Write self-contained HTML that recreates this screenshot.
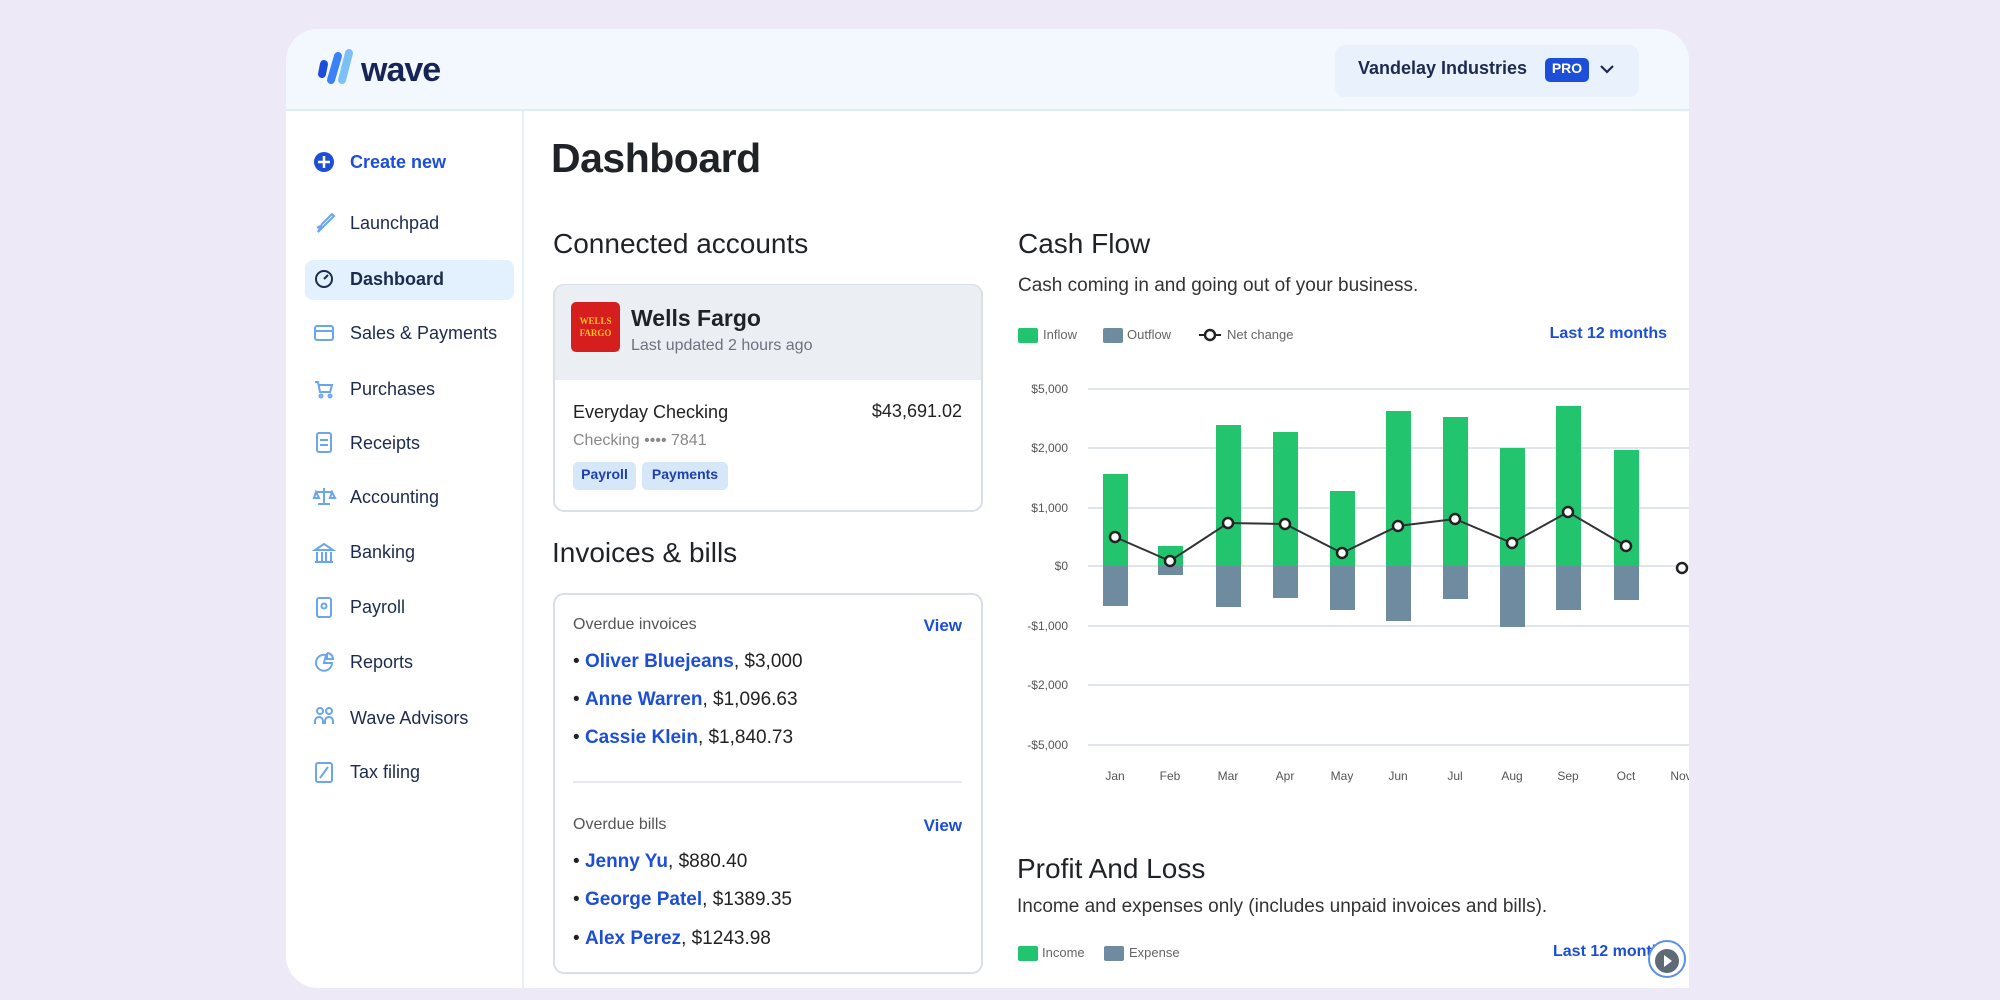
<!DOCTYPE html>
<html><head><meta charset="utf-8"><style>
*{margin:0;padding:0;box-sizing:border-box}
body{width:2000px;height:1000px;background:#ede9f6;font-family:"Liberation Sans",sans-serif;position:relative;overflow:hidden}
#card{position:absolute;left:286px;top:29px;width:1403px;height:959px;background:#fff;border-radius:32px 32px 0 32px;overflow:hidden}
.a{position:absolute;white-space:nowrap}
.nav{position:absolute;left:64px;font-size:18px;color:#1d2b4f;line-height:22px}
.blue{color:#1d4ed8}
.it{font-size:19px;color:#222;line-height:24px}
.it b{color:#1d4ed8}
</style></head><body>
<div id="card">
<svg class="a" style="left:-286px;top:-29px" width="2000" height="1000" viewBox="0 0 2000 1000">
<rect x="286" y="29" width="1403" height="81" fill="#f3f8fe"/>
<line x1="286" y1="110" x2="1689" y2="110" stroke="#e0ecf8" stroke-width="2"/>
<line x1="523" y1="110" x2="523" y2="988" stroke="#e8f0f8" stroke-width="2"/>
<rect x="1335" y="45" width="304" height="52" rx="10" fill="#e8f1fc"/>
<g stroke-linecap="round" fill="none">
<line x1="322" y1="74" x2="324" y2="64" stroke="#1d4ed8" stroke-width="8"/>
<line x1="331" y1="80" x2="338" y2="56" stroke="#3b82f6" stroke-width="8"/>
<line x1="342" y1="80" x2="349" y2="53" stroke="#7cc0f5" stroke-width="8"/>
</g>
<rect x="305" y="260" width="209" height="40" rx="8" fill="#e3f0fd"/>
<rect x="554" y="285" width="428" height="226" rx="10" fill="#fff" stroke="#d9dfe6" stroke-width="2"/>
<path d="M555 380 V295 a10 10 0 0 1 10 -10 H971 a10 10 0 0 1 10 10 V380Z" fill="#ebeef2"/>
<rect x="571" y="302" width="49" height="50" rx="5" fill="#d71e1e"/>
<text x="595.5" y="324" font-size="9" fill="#f5c518" text-anchor="middle" font-family="Liberation Serif" font-weight="bold">WELLS</text>
<text x="595.5" y="336" font-size="9" fill="#f5c518" text-anchor="middle" font-family="Liberation Serif" font-weight="bold">FARGO</text>
<rect x="573" y="462" width="63" height="28" rx="5" fill="#d5e7f8"/>
<rect x="642" y="462" width="86" height="28" rx="5" fill="#d5e7f8"/>
<rect x="554" y="594" width="428" height="379" rx="10" fill="#fff" stroke="#d9dfe6" stroke-width="2"/>
<line x1="573" y1="782" x2="962" y2="782" stroke="#e6e9ee" stroke-width="2"/>
<g stroke="#dfe5ea" stroke-width="2">
<line x1="1088" y1="389" x2="1689" y2="389"/><line x1="1088" y1="448" x2="1689" y2="448"/>
<line x1="1088" y1="508" x2="1689" y2="508"/><line x1="1088" y1="566" x2="1689" y2="566"/>
<line x1="1088" y1="626" x2="1689" y2="626"/><line x1="1088" y1="685" x2="1689" y2="685"/>
<line x1="1088" y1="745" x2="1689" y2="745"/></g>
<g font-size="12" fill="#555" text-anchor="end">
<text x="1068" y="393">$5,000</text><text x="1068" y="452">$2,000</text><text x="1068" y="512">$1,000</text>
<text x="1068" y="570">$0</text><text x="1068" y="630">-$1,000</text><text x="1068" y="689">-$2,000</text><text x="1068" y="749">-$5,000</text></g>
<g font-size="12" fill="#555" text-anchor="middle">
<text x="1115" y="780">Jan</text><text x="1170" y="780">Feb</text><text x="1228" y="780">Mar</text><text x="1285" y="780">Apr</text><text x="1342" y="780">May</text><text x="1398" y="780">Jun</text><text x="1455" y="780">Jul</text><text x="1512" y="780">Aug</text><text x="1568" y="780">Sep</text><text x="1626" y="780">Oct</text><text x="1681" y="780">Nov</text></g>
<g fill="#22c46e">
<rect x="1103" y="474" width="25" height="92"/><rect x="1158" y="546" width="25" height="20"/>
<rect x="1216" y="425" width="25" height="141"/><rect x="1273" y="432" width="25" height="134"/>
<rect x="1330" y="491" width="25" height="75"/><rect x="1386" y="411" width="25" height="155"/>
<rect x="1443" y="417" width="25" height="149"/><rect x="1500" y="448" width="25" height="118"/>
<rect x="1556" y="406" width="25" height="160"/><rect x="1614" y="450" width="25" height="116"/></g>
<g fill="#6f8ba0">
<rect x="1103" y="566" width="25" height="40"/><rect x="1158" y="566" width="25" height="9"/>
<rect x="1216" y="566" width="25" height="41"/><rect x="1273" y="566" width="25" height="32"/>
<rect x="1330" y="566" width="25" height="44"/><rect x="1386" y="566" width="25" height="55"/>
<rect x="1443" y="566" width="25" height="33"/><rect x="1500" y="566" width="25" height="61"/>
<rect x="1556" y="566" width="25" height="44"/><rect x="1614" y="566" width="25" height="34"/></g>
<polyline points="1115,537 1170,561 1228,523 1285,524 1342,553 1398,526 1455,519 1512,543 1568,512 1626,546" fill="none" stroke="#333" stroke-width="2"/>
<g fill="#fff" stroke="#222" stroke-width="2.5">
<circle cx="1115" cy="537" r="5"/><circle cx="1170" cy="561" r="5"/><circle cx="1228" cy="523" r="5"/><circle cx="1285" cy="524" r="5"/><circle cx="1342" cy="553" r="5"/><circle cx="1398" cy="526" r="5"/><circle cx="1455" cy="519" r="5"/><circle cx="1512" cy="543" r="5"/><circle cx="1568" cy="512" r="5"/><circle cx="1626" cy="546" r="5"/><circle cx="1682" cy="568" r="5"/></g>
<rect x="1018" y="328" width="20" height="15" rx="2" fill="#22c46e"/>
<rect x="1103" y="328" width="20" height="15" rx="2" fill="#6f8ba0"/>
<line x1="1199" y1="335" x2="1221" y2="335" stroke="#222" stroke-width="2"/><circle cx="1210" cy="335" r="5" fill="#fff" stroke="#222" stroke-width="2.5"/>
<rect x="1018" y="946" width="20" height="15" rx="2" fill="#22c46e"/>
<rect x="1104" y="946" width="20" height="15" rx="2" fill="#6f8ba0"/>
<circle cx="324" cy="162" r="10" fill="#1d4ed8"/><path d="M324 156 V168 M318 162 H330" stroke="#fff" stroke-width="2.5"/>
<g fill="none" stroke="#6aa6ee" stroke-width="2">
<path d="M318 232 l4-8 l10-10 l2 2 l-10 10z M320 226 l-3 2"/>
<circle cx="324" cy="279" r="8" stroke="#1d2b4f"/><path d="M324 279 l4-4" stroke="#1d2b4f"/>
<rect x="315" y="326" width="18" height="14" rx="2"/><line x1="315" y1="331" x2="333" y2="331"/>
<path d="M315 382 h3 l2 10 h10 l2-7 h-13"/><circle cx="321" cy="396" r="1.5"/><circle cx="330" cy="396" r="1.5"/>
<rect x="317" y="433" width="14" height="19" rx="2"/><path d="M320 440 h8 M320 445 h8"/>
<path d="M324 488 v16 M316 492 h16 M318 504 h12 M316 492 l-2 6 h5z M332 492 l-2 6 h5z"/>
<path d="M315 550 l9-6 l9 6 z M317 552 v9 M322 552 v9 M326 552 v9 M331 552 v9 M315 562 h18"/>
<rect x="317" y="598" width="14" height="19" rx="2"/><circle cx="324" cy="606" r="2.5"/>
<path d="M326 655 a8 8 0 1 0 6 8 h-8 z M327 653 v6 h6 a6 6 0 0 0 -6 -6"/>
<circle cx="320" cy="711" r="3"/><circle cx="329" cy="711" r="3"/><path d="M315 724 v-3 a4 4 0 0 1 8 0 v3 M325 724 v-3 a4 4 0 0 1 8 0 v3"/>
<rect x="316" y="763" width="16" height="19" rx="2"/><path d="M320 778 l8-11"/>
</g>
<path d="M1601 66 l6 6 l6 -6" fill="none" stroke="#1d2b4f" stroke-width="2.2"/>
<rect x="1545" y="58" width="44" height="24" rx="5" fill="#1d4ed8"/>
</svg>

<div class="a" style="left:75px;top:22px;font-size:34px;font-weight:bold;color:#172554;letter-spacing:-1px">wave</div>
<div class="a" style="left:1072px;top:29px;font-size:18px;font-weight:bold;color:#1d2b4f">Vandelay Industries</div>
<div class="a" style="left:1259px;top:31px;font-size:14px;font-weight:bold;color:#fff;width:44px;text-align:center">PRO</div>

<div class="nav blue" style="top:122px;font-weight:bold;color:#1d4ed8">Create new</div>
<div class="nav" style="top:183px">Launchpad</div>
<div class="nav" style="top:239px;font-weight:bold">Dashboard</div>
<div class="nav" style="top:293px">Sales &amp; Payments</div>
<div class="nav" style="top:349px">Purchases</div>
<div class="nav" style="top:403px">Receipts</div>
<div class="nav" style="top:457px">Accounting</div>
<div class="nav" style="top:512px">Banking</div>
<div class="nav" style="top:567px">Payroll</div>
<div class="nav" style="top:622px">Reports</div>
<div class="nav" style="top:678px">Wave Advisors</div>
<div class="nav" style="top:732px">Tax filing</div>

<div class="a" style="left:265px;top:106px;font-size:41px;color:#1f2328;font-weight:bold;letter-spacing:-0.5px">Dashboard</div>
<div class="a" style="left:267px;top:199px;font-size:28px;color:#1f2328">Connected accounts</div>
<div class="a" style="left:345px;top:276px;font-size:23px;font-weight:bold;color:#1f2328">Wells Fargo</div>
<div class="a" style="left:345px;top:308px;font-size:16px;color:#6b7280">Last updated 2 hours ago</div>
<div class="a" style="left:287px;top:373px;font-size:18px;color:#222">Everyday Checking</div>
<div class="a" style="left:556px;top:372px;font-size:18px;color:#222;width:120px;text-align:right">$43,691.02</div>
<div class="a" style="left:287px;top:403px;font-size:16px;color:#888">Checking •••• 7841</div>
<div class="a" style="left:287px;top:437px;font-size:14px;font-weight:bold;color:#1e40af;width:63px;text-align:center">Payroll</div>
<div class="a" style="left:356px;top:437px;font-size:14px;font-weight:bold;color:#1e40af;width:86px;text-align:center">Payments</div>

<div class="a" style="left:266px;top:508px;font-size:28px;color:#1f2328">Invoices &amp; bills</div>
<div class="a" style="left:287px;top:587px;font-size:16px;color:#555">Overdue invoices</div>
<div class="a" style="left:636px;top:587px;font-size:17px;font-weight:bold;color:#1d4ed8;width:40px;text-align:right">View</div>
<div class="a it" style="left:287px;top:621px">• <b>Oliver Bluejeans</b>, $3,000</div>
<div class="a it" style="left:287px;top:659px">• <b>Anne Warren</b>, $1,096.63</div>
<div class="a it" style="left:287px;top:697px">• <b>Cassie Klein</b>, $1,840.73</div>
<div class="a" style="left:287px;top:787px;font-size:16px;color:#555">Overdue bills</div>
<div class="a" style="left:636px;top:787px;font-size:17px;font-weight:bold;color:#1d4ed8;width:40px;text-align:right">View</div>
<div class="a it" style="left:287px;top:821px">• <b>Jenny Yu</b>, $880.40</div>
<div class="a it" style="left:287px;top:859px">• <b>George Patel</b>, $1389.35</div>
<div class="a it" style="left:287px;top:898px">• <b>Alex Perez</b>, $1243.98</div>

<div class="a" style="left:732px;top:199px;font-size:28px;color:#1f2328">Cash Flow</div>
<div class="a" style="left:732px;top:246px;font-size:19px;color:#333">Cash coming in and going out of your business.</div>
<div class="a" style="left:757px;top:298px;font-size:13px;color:#666">Inflow</div>
<div class="a" style="left:841px;top:298px;font-size:13px;color:#666">Outflow</div>
<div class="a" style="left:941px;top:298px;font-size:13px;color:#666">Net change</div>
<div class="a" style="left:1220px;top:296px;font-size:16px;font-weight:bold;color:#1d4ed8;width:161px;text-align:right">Last 12 months</div>

<div class="a" style="left:731px;top:824px;font-size:28px;color:#1f2328">Profit And Loss</div>
<div class="a" style="left:731px;top:867px;font-size:19px;color:#333">Income and expenses only (includes unpaid invoices and bills).</div>
<div class="a" style="left:756px;top:916px;font-size:13px;color:#666">Income</div>
<div class="a" style="left:843px;top:916px;font-size:13px;color:#666">Expense</div>
<div class="a" style="left:1267px;top:914px;font-size:16px;font-weight:bold;color:#1d4ed8">Last 12 months</div>
<svg class="a" style="left:1362px;top:911px" width="40" height="40"><circle cx="19" cy="19" r="18" fill="#fff" stroke="#5b8fe8" stroke-width="2"/><circle cx="19" cy="21" r="12" fill="#5e6b76"/><path d="M16 15 L24 21 L16 27Z" fill="#fff"/></svg>
</div>
</body></html>
